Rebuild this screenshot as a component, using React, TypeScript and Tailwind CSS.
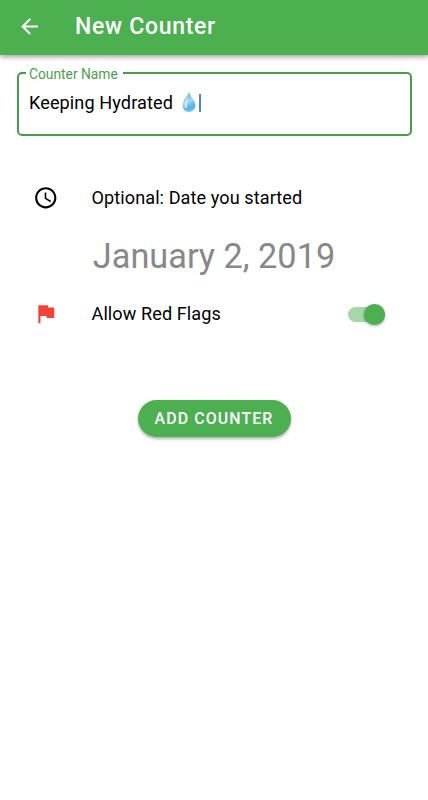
import { MdAccessTime, MdArrowBack, MdFlag } from "react-icons/md";

function AppBar({ title }: { title: string }) {
    return (
        <header className="relative flex h-[55px] items-center bg-[#4caf50] pl-[17px] pb-[3px] text-white shadow-[0_2px_5px_rgba(0,0,0,0.38)]">
            <button aria-label="Back">
                <MdArrowBack size={25} />
            </button>
            <h1 className="ml-[33px] pt-px text-[23px] leading-7 font-medium tracking-[0.7px]">
                {title}
            </h1>
        </header>
    );
}

function Drop() {
    return (
        <svg width="16" height="22" viewBox="0 0 16 22" className="ml-[8px]">
            <defs>
                <linearGradient id="drop" x1="0.3" y1="0" x2="0.6" y2="1">
                    <stop offset="0" stopColor="#6fa9c4" />
                    <stop offset="0.45" stopColor="#a5d9f0" />
                    <stop offset="0.8" stopColor="#4fb3e8" />
                    <stop offset="1" stopColor="#7cc8ee" />
                </linearGradient>
            </defs>
            <path
                d="M8 1C7 4.8 1.5 9.6 1.5 14.4a6.5 6.5 0 0 0 13 0C14.5 9.6 9 4.8 8 1Z"
                fill="url(#drop)"
            />
            <path
                d="M7 6C5.6 9 3.6 11.2 3.5 14c0 2 1.2 3.4 2.4 3.8C5.2 14.6 7.4 10.4 7 6Z"
                fill="#d0ecf8"
            />
        </svg>
    );
}

function CounterNameField() {
    return (
        <fieldset className="mr-[16px] ml-[17px] mt-[10px] h-[70.5px] rounded-[5px] border-2 border-[#459c49]">
            <legend className="ml-[7px] h-4 px-[3px] text-[13.8px] leading-[19px] text-[#4a9e4e]">
                <span className="inline-block w-[91px] whitespace-nowrap">Counter Name</span>
            </legend>
            <div className="mt-[9px] flex h-6 items-center pl-[10px]">
                <span className="pt-px text-[18.1px] leading-6 tracking-[0.1px] text-black">
                    Keeping Hydrated
                </span>
                <Drop />
                <span className="ml-[2px] mt-px h-[18px] w-[2px] bg-[#4a86cf]" />
            </div>
        </fieldset>
    );
}

function Switch() {
    return (
        <button
            role="switch"
            aria-checked="true"
            className="flex h-[15px] w-[37.5px] items-center justify-end rounded-full bg-[#a5d7a7]"
        >
            <span className="size-[21px] shrink-0 rounded-full bg-[#4caf50] shadow-[0_1px_3px_rgba(0,0,0,0.35)]" />
        </button>
    );
}

export default function App() {
    return (
        <div className="min-h-[800px] w-full bg-white font-[Roboto,sans-serif]">
            <AppBar title="New Counter" />
            <CounterNameField />

            <div className="mt-[49.5px] flex h-[26px] items-center pl-[33px] text-[18.1px] tracking-[0.08px] text-black">
                <MdAccessTime size={25.5} />
                <span className="ml-[33px]">Optional: Date you started</span>
            </div>
            <p className="mt-[24px] text-center text-[34.3px] leading-[42px] text-[#888]">
                January 2, 2019
            </p>
            <div className="mt-[24px] flex h-[26px] items-center pr-[43px] pl-[33px] text-[18.1px] tracking-[0.08px] text-black">
                <MdFlag size={25.5} className="text-[#f44336]" />
                <span className="ml-[33px] flex-1">Allow Red Flags</span>
                <Switch />
            </div>

            <div className="mt-[73px] flex justify-center">
                <button className="h-[37px] w-[153px] rounded-full bg-[#4caf50] text-[15.9px] font-medium tracking-[1.1px] whitespace-nowrap text-white shadow-[0_2px_3px_rgba(0,0,0,0.3)]">
                    ADD COUNTER
                </button>
            </div>
        </div>
    );
}
